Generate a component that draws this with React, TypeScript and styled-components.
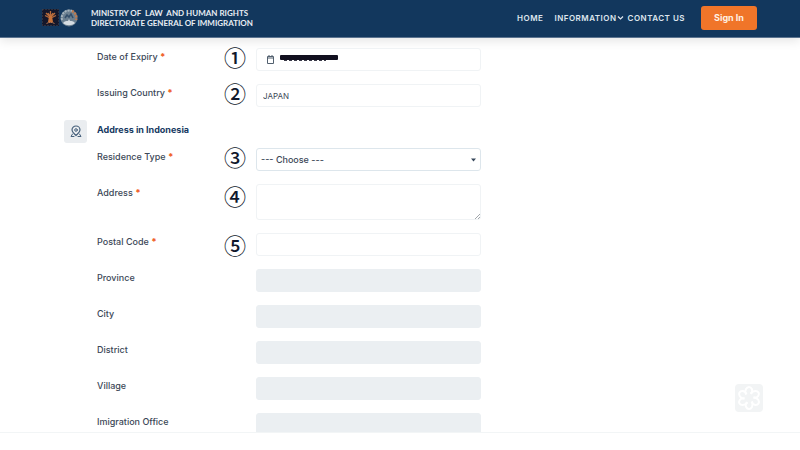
import React from "react";
import styled, { createGlobalStyle } from "styled-components";

const GlobalStyle = createGlobalStyle`
  *, *::before, *::after { box-sizing: border-box; }
  body { margin: 0; background: #fff; }
  body, input, select, textarea, button { font-family: Inter, "Liberation Sans", sans-serif; }
`;

const Page = styled.div`
  display: flex;
  flex-direction: column;
  height: 100vh;
  overflow: hidden;
  color: #3c4857;
`;

const Header = styled.header`
  display: flex;
  align-items: center;
  flex: none;
  height: 38px;
  padding: 0 43px 2px 42px;
  background: #12375d;
  border-bottom: 1px solid #5c7490;
  box-shadow: 0 2px 12px rgba(0, 0, 0, 0.12);
  color: #e9eef4;
`;

const Logos = styled.div`
  display: flex;
  align-items: center;
  gap: 1px;
  margin-right: 13px;
`;

const Ministry = styled.p`
  flex: 1;
  margin: 0;
  font: 700 8px/10px Lato, sans-serif;
  white-space: pre;
`;

const Nav = styled.nav`
  display: flex;
  align-items: center;
`;

const NavLink = styled.a<{ $gap: number }>`
  display: flex;
  align-items: center;
  margin-right: ${(p) => p.$gap}px;
  color: #dfe6ee;
  font-size: 8px;
  font-weight: 600;
  line-height: 10px;
  letter-spacing: 0.5px;
  text-decoration: none;
  white-space: nowrap;
`;

const SignIn = styled.button`
  width: 56px;
  height: 24px;
  padding: 0;
  border: 0;
  border-radius: 3px;
  background: #f07529;
  color: #fff0e4;
  font-size: 9px;
  font-weight: 700;
`;

const Content = styled.main`
  flex: 1;
  min-height: 0;
  overflow: hidden;
  padding: 10px 64px 0;
`;

const Form = styled.form`
  display: flex;
  flex-direction: column;
  gap: 13px;
`;

const Group = styled.div`
  display: flex;
  flex-direction: column;
  gap: 5px;
`;

const Row = styled.div`
  display: grid;
  grid-template-columns: 127px 32px minmax(0, 225px);
  align-items: start;
  padding-left: 33px;
`;

const Label = styled.label`
  padding-top: 3px;
  font-size: 9px;
  font-weight: 500;
  line-height: 12px;
`;

const Star = styled.span`
  color: #f0622b;
  font-weight: 900;
`;

const Step = styled.span<{ $low?: boolean }>`
  padding-top: ${(p) => (p.$low ? 3 : 0)}px;
  color: #10182c;
  font: 500 22px/16px "Noto Sans CJK JP", sans-serif;
`;

const Field = styled.input`
  display: block;
  width: 100%;
  height: 23px;
  padding: 0 6px;
  border: 1px solid #f0f3f5;
  border-radius: 3px;
  background: #fff;
  color: #3c4857;
  font-size: 8px;
  &:disabled {
    border-color: #ebeff2;
    background: #ebeff2;
  }
`;

const Area = styled.textarea`
  display: block;
  width: 100%;
  height: 36px;
  padding: 4px 6px;
  border: 1px solid #f0f3f5;
  border-radius: 3px;
  font-size: 8px;
  resize: none;
`;

const Overlay = styled.div`
  display: grid;
  align-items: center;
  > * { grid-area: 1 / 1; }
  > svg { pointer-events: none; margin-left: 10px; }
`;

const SelectWrap = styled(Overlay)`
  > svg { justify-self: end; margin-right: 5px; }
`;

const AreaWrap = styled(Overlay)`
  > svg { place-self: end; margin: 0 1px 1px 0; }
`;

const Select = styled.select`
  appearance: none;
  width: 100%;
  height: 23px;
  padding: 0 4px;
  border: 1px solid #dde6ec;
  border-radius: 3px;
  background: #fff;
  color: #3c4857;
  font-size: 9px;
  font-weight: 500;
`;

const Section = styled.div`
  display: flex;
  align-items: center;
  gap: 10px;
`;

const SectionIcon = styled.span`
  display: grid;
  place-items: center;
  width: 23px;
  height: 23px;
  border-radius: 3px;
  background: #eaedf0;
`;

const SectionTitle = styled.h2`
  margin: 0;
  padding-bottom: 3px;
  color: #173a62;
  font-size: 9px;
  font-weight: 700;
  line-height: 12px;
`;

const Footer = styled.footer`
  flex: none;
  height: 18px;
  border-top: 1px solid #f2f5f6;
`;

const ChatButton = styled.button`
  position: absolute;
  right: 37px;
  bottom: 38px;
  width: 28px;
  height: 28px;
  padding: 0;
  border: 0;
  border-radius: 4px;
  background: #f2f4f5;
`;

const MinistryLogo = () => (
  <svg width="17" height="17" viewBox="0 0 17 17" aria-hidden="true">
    <rect width="17" height="17" fill="#15172a" />
    <rect x=".5" y=".5" width="16" height="16" fill="none" stroke="#4a4a50" strokeDasharray="1 2" />
    <path d="M8.500 2v10M4 4l3 3M13 4l-3 3M3 6.500l4 2M14 6.500l-4 2M6 4l2 3M11 4L9 7" stroke="#b86c3c" strokeWidth="1.300" />
    <path d="M7 7h3l1 6H6z" fill="#c9733a" />
    <path d="M4.500 14.500c2-1.500 6-1.500 8 0" stroke="#b9764d" fill="none" />
  </svg>
);

const ImmigrationLogo = () => (
  <svg width="18" height="18" viewBox="0 0 18 18" aria-hidden="true">
    <circle cx="9" cy="9" r="8.500" fill="#6b7f90" />
    <path d="M2 11a7.500 7.500 0 0 1 10-9" stroke="#a5b3bd" strokeWidth="2" fill="none" strokeDasharray="2 1" />
    <path d="M12 2a7.500 7.500 0 0 1 4 9" stroke="#c07a4c" strokeWidth="2.500" fill="none" strokeDasharray="2 1" />
    <path d="M5 9l2-3 2 2 2-3 2 4" stroke="#344f6b" strokeWidth="1.500" fill="none" />
    <path d="M3 14c2-2 3-2 5-2l1-2 1 2c2 0 3 0 5 2-3 3-9 3-12 0z" fill="#d5dce2" />
  </svg>
);

const PinIcon = () => (
  <svg width="12" height="13" viewBox="0 0 12 13" fill="none" stroke="#47617c" strokeLinecap="round" aria-hidden="true">
    <path d="M6 10.500C4.500 9 2 7.500 2 5a4 4 0 0 1 8 0C10 7.500 7.500 9 6 10.500z" strokeWidth="1.200" />
    <circle cx="6" cy="5" r="1.300" />
    <path d="M2.500 9L1 11.500h3M9.500 9l1.500 2.500H8" />
  </svg>
);

const CalendarRedacted = () => (
  <svg width="73" height="13" viewBox="0 0 73 13" aria-hidden="true">
    <path d="M1.500 3.500h6v7h-6zM1.500 5h6M3 2v1.500M6 2v1.500" fill="none" stroke="#52606f" />
    <path d="M15 2h56q1 0 1 1v3q0 1-1 1H15q-1 0-1-1V3q0-1 1-1z" fill="#12101f" />
    <path d="M18 7.500h42" stroke="#3a3a48" strokeDasharray="3 2" />
  </svg>
);

const Knot = () => (
  <svg width="28" height="28" viewBox="-14 -14 28 28" fill="none" stroke="#fff" strokeWidth="2" aria-hidden="true">
    {[0, 60, 120, 180, 240, 300].map((a) => (
      <path key={a} transform={`rotate(${a})`} d="M-3-3.500C-5-8-2-11 0-11s5 3 2 7" />
    ))}
  </svg>
);

type RowProps = {
  id: string;
  label: string;
  step?: string;
  low?: boolean;
  children: React.ReactNode;
};

const FormRow = ({ id, label, step, low, children }: RowProps) => (
  <Row>
    <Label htmlFor={id}>
      {label} {step && <Star>*</Star>}
    </Label>
    <Step $low={low}>{step}</Step>
    {children}
  </Row>
);

const autoFilled = ["Province", "City", "District", "Village", "Imigration Office"];

export default function App() {
  return (
    <>
      <GlobalStyle />
      <Page>
        <Header>
          <Logos>
            <MinistryLogo />
            <ImmigrationLogo />
          </Logos>
          <Ministry>{"MINISTRY OF  LAW  AND HUMAN RIGHTS\nDIRECTORATE GENERAL OF IMMIGRATION"}</Ministry>
          <Nav>
            <NavLink href="#home" $gap={11}>HOME</NavLink>
            <NavLink href="#information" $gap={4}>
              INFORMATION
              <svg width="7" height="6" viewBox="0 0 7 6" fill="none" stroke="currentColor" strokeWidth="1.200" aria-hidden="true">
                <path d="M1 1.500l2.500 2.500L6 1.500" />
              </svg>
            </NavLink>
            <NavLink href="#contact" $gap={16}>CONTACT US</NavLink>
          </Nav>
          <SignIn type="button">Sign In</SignIn>
        </Header>
        <Content>
          <Form>
            <FormRow id="expiry" label="Date of Expiry" step="①">
              <Overlay>
                <Field id="expiry" type="text" />
                <CalendarRedacted />
              </Overlay>
            </FormRow>
            <FormRow id="country" label="Issuing Country" step="②">
              <Field id="country" type="text" defaultValue="JAPAN" />
            </FormRow>
            <Group>
              <Section>
                <SectionIcon><PinIcon /></SectionIcon>
                <SectionTitle>Address in Indonesia</SectionTitle>
              </Section>
              <FormRow id="residence" label="Residence Type" step="③">
                <SelectWrap>
                  <Select id="residence">
                    <option>--- Choose ---</option>
                  </Select>
                  <svg width="5" height="4" viewBox="0 0 5 4" fill="#36475a" aria-hidden="true">
                    <path d="M0 .5h5L2.500 3.500z" />
                  </svg>
                </SelectWrap>
              </FormRow>
            </Group>
            <FormRow id="address" label="Address" step="④" low>
              <AreaWrap>
                <Area id="address" />
                <svg width="5" height="5" viewBox="0 0 5 5" stroke="#a3a8ad" aria-hidden="true">
                  <path d="M0 5l5-5M3 5l2-2" />
                </svg>
              </AreaWrap>
            </FormRow>
            <FormRow id="postal" label="Postal Code" step="⑤" low>
              <Field id="postal" type="text" />
            </FormRow>
            {autoFilled.map((name) => (
              <FormRow key={name} id={name.replace(" ", "-")} label={name}>
                <Field id={name.replace(" ", "-")} type="text" disabled />
              </FormRow>
            ))}
          </Form>
        </Content>
        <Footer />
        <ChatButton type="button" aria-label="Open assistant">
          <Knot />
        </ChatButton>
      </Page>
    </>
  );
}
